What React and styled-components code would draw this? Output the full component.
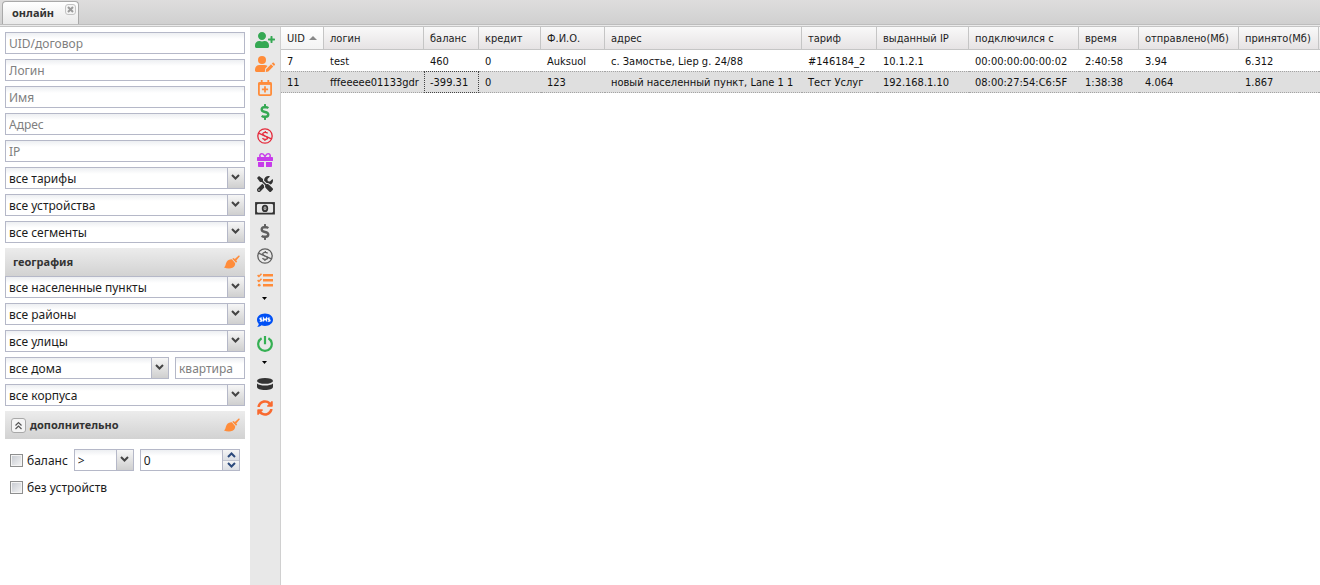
import React from "react";
import styled, { createGlobalStyle, css } from "styled-components";
import {
  FaUserPlus,
  FaDollarSign,
  FaGift,
  FaTools,
  FaSyncAlt,
} from "react-icons/fa";

const GRID_FONT = `"DejaVu Sans Condensed", "DejaVu Sans", "Noto Sans", sans-serif`;
const FORM_FONT = `"Noto Sans", "Open Sans", sans-serif`;

const GlobalStyle = createGlobalStyle`
  * { box-sizing: border-box; }
  body { margin: 0; background: #fff; color: #1c1c1c; font-family: ${FORM_FONT}; font-size: 12px; }
  button, input, select { font: inherit; color: inherit; margin: 0; }
`;

const Page = styled.div`
  display: flex;
  flex-direction: column;
  min-height: 100vh;
`;

const TabBar = styled.nav`
  display: flex;
  align-items: flex-end;
  height: 24px;
  padding-left: 2px;
  background: linear-gradient(#dedddd, #d0d0d0);
`;

const Tab = styled.div`
  display: flex;
  width: 77px;
  height: 23px;
  padding: 0 2px 0 9px;
  border: 1px solid #a9a9a9;
  border-bottom: 0;
  border-radius: 4px 4px 0 0;
  background: linear-gradient(#fff, #e9e9e9);
`;

const TabLabel = styled.button`
  flex: 1;
  padding: 0 0 2px;
  border: 0;
  background: none;
  text-align: left;
  font-size: 11px;
  font-weight: bold;
  color: #333;
`;

const TabClose = styled.button`
  display: flex;
  align-items: center;
  justify-content: center;
  width: 11px;
  height: 11px;
  margin-top: 2px;
  padding: 0;
  border: 1px solid #c4c4c4;
  border-radius: 3px;
  background: #f4f4f4;
`;

const TabStrip = styled.div`
  height: 3px;
  border-top: 1px solid #bdbdbd;
  border-bottom: 1px solid #c4c4c4;
  background: #eaeaea;
`;

const Body = styled.div`
  display: flex;
  flex: 1;
`;

const Filters = styled.form`
  display: flex;
  flex-direction: column;
  gap: 5px;
  width: 250px;
  flex: none;
  padding: 5px;
`;

const frame = css`
  height: 22px;
  border: 1px solid #b5b8c8;
  background: linear-gradient(#edeff2, #fff 6px);
`;

const TextField = styled.input`
  ${frame}
  width: ${(p) => p.$width || "100%"};
  min-width: 0;
  padding: 0 3px;
  border-radius: 0;
  outline: none;
  &::placeholder { color: #808080; opacity: 1; }
`;

const ComboFrame = styled.span`
  ${frame}
  position: relative;
  display: flex;
  width: ${(p) => p.$width || "100%"};
`;

const ComboSelect = styled.select`
  flex: 1;
  min-width: 0;
  padding: 0 18px 0 3px;
  border: 0;
  outline: none;
  appearance: none;
  background: none;
`;

const ComboTrigger = styled.span`
  position: absolute;
  top: 0;
  right: 0;
  display: flex;
  align-items: center;
  justify-content: center;
  width: 17px;
  height: 20px;
  padding: 0 1px 2px 0;
  border-left: 1px solid #b5b8c8;
  background: linear-gradient(#f6f6f6, #cfcfcf);
  pointer-events: none;
`;

const Section = styled.fieldset`
  display: flex;
  flex-direction: column;
  gap: 5px;
  min-width: 0;
  margin: 0;
  padding: 0;
  border: 0;
`;

const SectionHeader = styled.div`
  display: flex;
  align-items: center;
  height: 28px;
  margin-bottom: ${(p) => (p.$gap ? "5px" : "-5px")};
  padding: 0 5px 0 ${(p) => (p.$gap ? "6px" : "8px")};
  background: linear-gradient(#ececec, #d2d2d2);
`;

const SectionTitle = styled.h2`
  flex: 1;
  margin: 0;
  font-size: 11px;
  line-height: 16px;
  font-weight: bold;
  color: #333;
`;

const IconButton = styled.button`
  display: flex;
  align-items: center;
  justify-content: center;
  width: 17px;
  height: 24px;
  padding: 0;
  border: 0;
  background: none;
  color: #ff8c3a;
`;

const Collapse = styled.button`
  display: flex;
  align-items: center;
  justify-content: center;
  width: 15px;
  height: 15px;
  margin-right: 4px;
  padding: 0;
  border: 1px solid #a8a8a8;
  border-radius: 3px;
  background: #f5f5f5;
`;

const FieldRow = styled.div`
  display: flex;
  align-items: center;
  gap: 6px;
  height: 22px;
  padding: ${(p) => (p.$inset ? "0 5px" : "0")};
`;

const CheckLabel = styled.label`
  display: flex;
  align-items: center;
  gap: 4px;
`;

const Check = styled.input`
  width: 13px;
  height: 13px;
  appearance: none;
  border: 1px solid #8e8f8f;
  background: linear-gradient(135deg, #c4c8cf, #f6f6f6);
  box-shadow: inset 0 0 0 1px #f4f4f4;
  &:checked { background: #444; }
`;

const Spinner = styled.span`
  ${frame}
  display: flex;
  flex: 1;
`;

const SpinInput = styled.input`
  flex: 1;
  width: 0;
  padding: 0 3px;
  border: 0;
  outline: none;
  background: none;
`;

const SpinButtons = styled.span`
  display: flex;
  flex-direction: column;
  width: 17px;
  border-left: 1px solid #b5b8c8;
`;

const SpinButton = styled.button`
  display: flex;
  flex: 1;
  align-items: center;
  justify-content: center;
  padding: 0;
  border: 0;
  background: linear-gradient(#f5f5f5, #dcdfe4);
  & + & { border-top: 1px solid #c2c5d0; }
`;

const Toolbar = styled.div`
  display: flex;
  flex-direction: column;
  align-items: center;
  flex: none;
  width: 31px;
  padding-top: 1px;
  border-right: 1px solid #d0d0d0;
  background: #e8e8e8;
`;

const ToolButton = styled.button`
  display: flex;
  align-items: center;
  justify-content: center;
  width: 24px;
  height: 24px;
  padding: 0;
  border: 0;
  background: none;
  color: ${(p) => p.$color};
`;

const MenuArrow = styled.button`
  display: flex;
  justify-content: center;
  width: 24px;
  height: 16px;
  padding: 5px 1px 0 0;
  border: 0;
  background: none;
`;

const GridPane = styled.main`
  flex: 1;
  min-width: 0;
  overflow: hidden;
`;

const Grid = styled.table`
  width: 100%;
  border-collapse: separate;
  border-spacing: 0;
  table-layout: fixed;
  font-family: ${GRID_FONT};
  font-size: 11px;
  line-height: 14px;
`;

const HeadCell = styled.th`
  height: 23px;
  padding: ${(p) => (p.$filler ? "0" : "2px 0 0 6px")};
  border-right: ${(p) => (p.$filler ? "0" : "1px solid #c5c5c5")};
  border-bottom: 1px solid #c5c5c5;
  background: ${(p) => (p.$sorted ? "linear-gradient(#fff, #f3f3f3)" : "linear-gradient(#f9f9f9, #e6e3e4)")};
  text-align: left;
  font-weight: normal;
  white-space: nowrap;
`;

const SortMark = styled.svg`
  margin-left: 4px;
  vertical-align: 2px;
`;

const Row = styled.tr`
  background: ${(p) => (p.$selected ? "#dfdfdf" : "#fff")};
  ${(p) =>
    p.$selected &&
    css`
      td { border-top: 1px dotted #a3a3a3; border-bottom: 1px dotted #a3a3a3; }
    `}
`;

const Cell = styled.td`
  height: ${(p) => (p.$tall ? "22px" : "21px")};
  padding: ${(p) => (p.$filler ? "0" : "2px 0 0 6px")};
  white-space: nowrap;
  color: #111;
  outline: ${(p) => (p.$focused ? "1px dotted #444" : "0")};
  outline-offset: -1px;
`;

const Chevron = ({ color = "#444", up }) => (
  <svg width="9" height="6" viewBox="0 0 9 6" aria-hidden="true">
    <path d={up ? "M1 5 4.500 1.500 8 5" : "M1 1 4.500 4.500 8 1"} fill="none" stroke={color} strokeWidth="2" />
  </svg>
);

const Brush = () => (
  <svg width="16" height="14" viewBox="0 0 16 14" fill="currentColor" aria-hidden="true">
    <path d="M0 12.600C1.600 11.500 1.500 9 2.600 7c1-1.700 3-2.800 5.300-2.700l3.300 3.900c.1 2-.9 3.800-2.700 4.600C6 13.900 2.500 13.500 0 12.600z" />
    <path d="M8.300 3.800 9.600 3l1.200 1.100L15 .3l.8.900-3.500 4.300.9 1.200-1.200 1.100z" />
  </svg>
);

const UserEdit = () => (
  <svg width="20" height="16" viewBox="0 0 20 16" fill="currentColor" aria-hidden="true">
    <circle cx="7" cy="4" r="4" />
    <path d="M4.500 9h5c1.200 0 2.200.4 3 1.100L10.300 12.500 9.800 16H1.400C.6 16 0 15.400 0 14.600v-1C0 11 2 9 4.500 9z" />
    <path d="M16 8.300l2.300 2.300-5 5-2.500.4.300-2.700zM16.700 7.600l.8-.7c.5-.4 1-.4 1.400 0l.8.8c.4.4.4 1 0 1.400l-.7.800z" />
  </svg>
);

const CalendarPlus = () => (
  <svg width="16" height="16" viewBox="0 0 16 16" fill="none" stroke="currentColor" aria-hidden="true">
    <rect x="1.900" y="2.900" width="12.200" height="12.200" rx="1" strokeWidth="1.800" />
    <path d="M1.500 3.700h13" strokeWidth="2.400" />
    <path d="M4.700 0v3.500M11.300 0v3.500" strokeWidth="1.800" />
    <path d="M8 6.300v6.200M4.900 9.400h6.200" strokeWidth="1.800" />
  </svg>
);

const Checklist = () => (
  <svg width="16" height="14" viewBox="0 0 16 14" fill="none" stroke="currentColor" aria-hidden="true">
    <path d="M6 2.200h10M6 7.200h10M6 12.200h10" strokeWidth="2.400" />
    <path d="M.6 2.100 1.900 3.400 4.500.7M.6 7.100l1.300 1.300 2.600-2.700" strokeWidth="1.500" />
    <circle cx="2.200" cy="12.200" r="1.400" fill="currentColor" stroke="none" />
  </svg>
);

const Power = () => (
  <svg width="16" height="16" viewBox="0 0 16 16" fill="none" stroke="currentColor" strokeWidth="2.200" aria-hidden="true">
    <path d="M4.600 2.200a6.800 6.800 0 1 0 6.800 0M8 0v8.300" />
  </svg>
);

const NoMoney = () => (
  <svg width="16" height="16" viewBox="0 0 16 16" fill="none" stroke="currentColor" strokeWidth="1.300" aria-hidden="true">
    <circle cx="8" cy="8" r="7.200" />
    <path d="M1.600 5.200 14.400 10.800" />
    <path d="M10.600 5.300C9.900 4.200 6.400 4 5.800 5.600 5.500 6.700 6.500 7.300 8 7.900M9.300 8.600c1 .4 1.400.9 1.200 1.700-.5 1.600-4 1.500-5-.1M8.300 3v1.500M7.900 11.500V13" />
  </svg>
);

const Banknote = () => (
  <svg width="20" height="13" viewBox="0 0 20 13" aria-hidden="true">
    <rect x="1" y="1" width="18" height="10.600" fill="none" stroke="currentColor" strokeWidth="1.800" />
    <path d="M1 1h3L1 3.600zM19 1v2.600L16 1zM1 12V9l3 3zM19 12h-3l3-3z" fill="currentColor" />
    <ellipse cx="10" cy="6.400" rx="2.300" ry="2.700" fill="none" stroke="currentColor" strokeWidth="1.800" />
    <path d="M10 5.200v2.400" stroke="currentColor" strokeWidth="1" />
  </svg>
);

const SmsBubble = () => (
  <svg width="16" height="15" viewBox="0 0 16 15" aria-hidden="true">
    <path d="M8 .5c4.500 0 8 2.800 8 6.200s-3.500 6.200-8 6.200c-1.300 0-2.500-.2-3.500-.6C3.300 13.200 1.800 14 .2 14c.8-.8 1.500-1.900 1.600-3C.7 9.800 0 8.300 0 6.700 0 3.300 3.500.5 8 .5z" fill="#0050f5" />
    <path d="M5.100 5.300c-.8-.5-2.200-.3-2.200.5 0 1 2.200.6 2.200 1.600 0 .9-1.500 1-2.300.5M6.500 8.500V5L8 7l1.500-2v3.500M13.100 5.300c-.8-.5-2.200-.3-2.200.5 0 1 2.200.6 2.200 1.600 0 .9-1.500 1-2.300.5" fill="none" stroke="#fff" strokeWidth="1.200" />
  </svg>
);

const Disks = () => (
  <svg width="16" height="12" viewBox="0 0 16 12" fill="currentColor" aria-hidden="true">
    <ellipse cx="8" cy="2.900" rx="8" ry="2.900" />
    <path d="M0 5.500C1.800 7 4.500 7.500 8 7.500s6.200-.5 8-2v3.400C16 10.600 12.500 12 8 12S0 10.600 0 8.900z" />
  </svg>
);

const Triangle = () => (
  <svg width="5" height="3" viewBox="0 0 5 3" aria-hidden="true">
    <path d="M0 0h5L2.500 3z" fill="#000" />
  </svg>
);

const Combo = ({ label, width }) => (
  <ComboFrame $width={width}>
    <ComboSelect aria-label={label}>
      <option>{label}</option>
    </ComboSelect>
    <ComboTrigger>
      <Chevron />
    </ComboTrigger>
  </ComboFrame>
);

const ClearButton = () => (
  <IconButton type="button" aria-label="очистить">
    <Brush />
  </IconButton>
);

const textFilters = ["UID/договор", "Логин", "Имя", "Адрес", "IP"];
const listFilters = ["все тарифы", "все устройства", "все сегменты"];
const placeFilters = ["все населенные пункты", "все районы", "все улицы"];

const tools = [
  { label: "добавить", color: "#35a853", icon: <FaUserPlus size={20} /> },
  { label: "изменить", color: "#ff8c3a", icon: <UserEdit /> },
  { label: "продлить", color: "#ff8c3a", icon: <CalendarPlus /> },
  { label: "платеж", color: "#35a853", icon: <FaDollarSign size={16} /> },
  { label: "снятие", color: "#e52b3c", icon: <NoMoney /> },
  { label: "бонус", color: "#c73bea", icon: <FaGift size={16} /> },
  { label: "настройки", color: "#333", icon: <FaTools size={16} /> },
  { label: "касса", color: "#333", icon: <Banknote /> },
  { label: "платежи", color: "#606060", icon: <FaDollarSign size={16} /> },
  { label: "снятия", color: "#606060", icon: <NoMoney /> },
  { label: "задачи", color: "#ff8c3a", icon: <Checklist />, menu: true },
  { label: "смс", color: "#0050f5", icon: <SmsBubble /> },
  { label: "питание", color: "#35b053", icon: <Power />, menu: true },
  { label: "база", color: "#333", icon: <Disks /> },
  { label: "обновить", color: "#f96a2f", icon: <FaSyncAlt size={16} /> },
];

const columns = [
  ["UID", 43],
  ["логин", 100],
  ["баланс", 55],
  ["кредит", 62],
  ["Ф.И.О.", 64],
  ["адрес", 197],
  ["тариф", 75],
  ["выданный IP", 92],
  ["подключился с", 110],
  ["время", 60],
  ["отправлено(Мб)", 100],
  ["принято(Мб)", 80],
];

const rows = [
  ["7", "test", "460", "0", "Auksuol", "с. Замостье, Liep g. 24/88", "#146184_2", "10.1.2.1", "00:00:00:00:00:02", "2:40:58", "3.94", "6.312"],
  ["11", "fffeeeee01133gdr", "-399.31", "0", "123", "новый населенный пункт, Lane 1 1", "Тест Услуг", "192.168.1.10", "08:00:27:54:C6:5F", "1:38:38", "4.064", "1.867"],
];

export default function App() {
  const [amount, setAmount] = React.useState(0);
  const [selected, setSelected] = React.useState(1);

  return (
    <Page>
      <GlobalStyle />
      <TabBar>
        <Tab>
          <TabLabel type="button">онлайн</TabLabel>
          <TabClose type="button" aria-label="закрыть">
            <svg width="7" height="7" viewBox="0 0 7 7" aria-hidden="true">
              <path d="M1 1l5 5M6 1 1 6" stroke="#9a9a9a" strokeWidth="2" />
            </svg>
          </TabClose>
        </Tab>
      </TabBar>
      <TabStrip />
      <Body>
        <Filters onSubmit={(e) => e.preventDefault()}>
          {textFilters.map((t) => (
            <TextField key={t} placeholder={t} aria-label={t} />
          ))}
          {listFilters.map((t) => (
            <Combo key={t} label={t} />
          ))}
          <Section aria-label="география">
            <SectionHeader>
              <SectionTitle>география</SectionTitle>
              <ClearButton />
            </SectionHeader>
            {placeFilters.map((t) => (
              <Combo key={t} label={t} />
            ))}
            <FieldRow>
              <Combo label="все дома" width="164px" />
              <TextField $width="70px" placeholder="квартира" aria-label="квартира" />
            </FieldRow>
            <Combo label="все корпуса" />
          </Section>
          <Section aria-label="дополнительно">
            <SectionHeader $gap>
              <Collapse type="button" aria-label="свернуть">
                <svg width="9" height="9" viewBox="0 0 9 9" aria-hidden="true">
                  <path d="M1.500 4.500l3-3 3 3M1.500 8l3-3 3 3" fill="none" stroke="#555" strokeWidth="1.200" />
                </svg>
              </Collapse>
              <SectionTitle>дополнительно</SectionTitle>
              <ClearButton />
            </SectionHeader>
            <FieldRow $inset>
              <CheckLabel>
                <Check type="checkbox" />
                баланс
              </CheckLabel>
              <Combo label=">" width="60px" />
              <Spinner>
                <SpinInput aria-label="сумма" value={amount} onChange={(e) => setAmount(Number(e.target.value) || 0)} />
                <SpinButtons>
                  <SpinButton type="button" aria-label="больше" onClick={() => setAmount(amount + 1)}>
                    <Chevron up color="#2c4a7c" />
                  </SpinButton>
                  <SpinButton type="button" aria-label="меньше" onClick={() => setAmount(amount - 1)}>
                    <Chevron color="#2c4a7c" />
                  </SpinButton>
                </SpinButtons>
              </Spinner>
            </FieldRow>
            <FieldRow $inset>
              <CheckLabel>
                <Check type="checkbox" />
                без устройств
              </CheckLabel>
            </FieldRow>
          </Section>
        </Filters>
        <Toolbar role="toolbar">
          {tools.map((t) => (
            <React.Fragment key={t.label}>
              <ToolButton type="button" aria-label={t.label} $color={t.color}>
                {t.icon}
              </ToolButton>
              {t.menu && (
                <MenuArrow type="button" aria-label={`${t.label}: меню`}>
                  <Triangle />
                </MenuArrow>
              )}
            </React.Fragment>
          ))}
        </Toolbar>
        <GridPane>
          <Grid>
            <colgroup>
              {columns.map(([name, width]) => (
                <col key={name} width={width} />
              ))}
              <col />
            </colgroup>
            <thead>
              <tr>
                {columns.map(([name], i) => (
                  <HeadCell key={name} $sorted={i === 0}>
                    {name}
                    {i === 0 && (
                      <SortMark width="8" height="4" viewBox="0 0 8 4" aria-hidden="true">
                        <path d="M0 4 4 0l4 4z" fill="#888" />
                      </SortMark>
                    )}
                  </HeadCell>
                ))}
                <HeadCell $filler />
              </tr>
            </thead>
            <tbody>
              {rows.map((row, r) => (
                <Row key={row[0]} $selected={r === selected} onClick={() => setSelected(r)}>
                  {row.map((value, c) => (
                    <Cell key={c} $tall={r === selected} $focused={r === selected && c === 2}>
                      {value}
                    </Cell>
                  ))}
                  <Cell $filler />
                </Row>
              ))}
            </tbody>
          </Grid>
        </GridPane>
      </Body>
    </Page>
  );
}
